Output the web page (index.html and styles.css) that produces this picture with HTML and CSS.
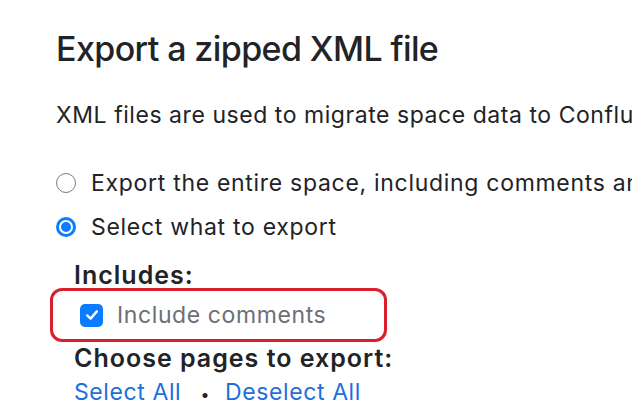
FILE: index.html
```html
<!DOCTYPE html>
<html lang="en">
<head>
  <meta charset="UTF-8">
  <meta name="viewport" content="width=device-width, initial-scale=1">
  <title>Export Space</title>
  <link rel="stylesheet" href="styles.css">
</head>
<body>
  <div class="page">
    <h1 class="title">Export a zipped XML file</h1>
    <p class="intro">XML files are used to migrate space data to Confluence Data Center or to another site.</p>

    <div class="option">
      <span class="radio"></span>
      <span class="option-label">Export the entire space, including comments and attachments</span>
    </div>
    <div class="option">
      <span class="radio checked"></span>
      <span class="option-label">Select what to export</span>
    </div>

    <div class="details">
      <div class="section-label">Includes:</div>
      <!-- highlighted row -->
      <div class="check-row">
        <span class="checkbox">
          <svg width="16" height="16" viewBox="0 0 16 16">
            <path d="M3.2 8.4 L6.6 11.6 L12.8 4.4" fill="none" stroke="#fff" stroke-width="2.4" stroke-linecap="round" stroke-linejoin="round"/>
          </svg>
        </span>
        <span class="check-label">Include comments</span>
      </div>
      <div class="section-label">Choose pages to export:</div>
      <div class="links">
        <a href="#" class="link">Select All</a>
        <span class="dot">•</span>
        <a href="#" class="link">Deselect All</a>
      </div>
    </div>
  </div>
</body>
</html>
```

FILE: styles.css
```css
body {
  margin: 0;
  background: #fff;
  font-family: Inter, "Noto Sans", sans-serif;
  color: #222327;
  overflow: hidden;
}
.page {
  padding: 27px 0 0 56px;
  white-space: nowrap;
}
.title {
  font-size: 34px;
  font-weight: 500;
  line-height: 44px;
  margin: 0;
  letter-spacing: -0.6px;
}
.intro {
  font-size: 23px;
  line-height: 30px;
  margin: 29px 0 31px 0;
  letter-spacing: 0.55px;
}
.option {
  display: flex;
  align-items: center;
  height: 44px;
  font-size: 23px;
  letter-spacing: 0.7px;
}
.radio {
  width: 20px;
  height: 20px;
  box-sizing: border-box;
  border: 1.5px solid #7b7b7f;
  border-radius: 50%;
  margin-right: 15px;
  flex-shrink: 0;
}
.radio.checked {
  border: none;
  background: #0b7cff;
  position: relative;
}
.radio.checked::after {
  content: "";
  position: absolute;
  left: 3px;
  top: 3px;
  width: 10px;
  height: 10px;
  border: 2px solid #fff;
  border-radius: 50%;
  background: #0b7cff;
}
.details {
  padding-left: 18px;
  margin-top: 10px;
}
.section-label {
  font-size: 25px;
  font-weight: 600;
  line-height: 32px;
  letter-spacing: 1px;
}
.check-row {
  display: flex;
  align-items: center;
  width: 337px;
  height: 54px;
  box-sizing: border-box;
  margin: -3px 0 0 -24px;
  padding-left: 27px;
  border: 3px solid #d91f2b;
  border-radius: 12px;
}
.checkbox {
  width: 23px;
  height: 23px;
  border-radius: 5px;
  background: #0b7cff;
  display: flex;
  align-items: center;
  justify-content: center;
  margin-right: 14px;
}
.check-label {
  font-size: 23px;
  color: #6c6f77;
  letter-spacing: 0.6px;
}
.links {
  font-size: 23px;
  line-height: 32px;
  margin-top: 2px;
  letter-spacing: 0.6px;
}
.link {
  color: #1c6fdc;
  text-decoration: none;
}
.dot {
  font-size: 16px;
  margin: 0 8px 0 12px;
  color: #222327;
}
```
